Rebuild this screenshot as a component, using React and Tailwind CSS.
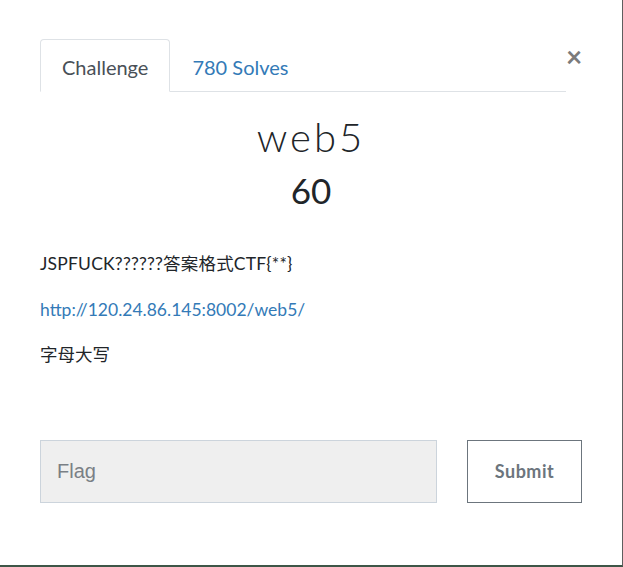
import React, { useState } from "react";

function App() {
  const [tab, setTab] = useState("challenge");
  const [flag, setFlag] = useState("");

  return (
    <div
      className="w-[623px] h-[567px] bg-white border-r border-r-[#5e5e5e] border-b-2 border-b-[#3e5647] overflow-hidden"
      style={{ fontFamily: "Lato, 'Noto Sans CJK SC', sans-serif" }}
    >
      <div className="pl-[40px] pr-[40px] pt-[39px]">
        {/* Tabs */}
        <div className="flex items-start">
          <ul className="flex w-[526px] border-b border-[#dee2e6]">
            <li>
              <button
                onClick={() => setTab("challenge")}
                className={
                  tab === "challenge"
                    ? "h-[53px] pt-[3px] px-[21px] -mb-px bg-white border border-[#dee2e6] border-b-white rounded-t-[4px] text-[20px] text-[#495057]"
                    : "h-[53px] pt-[3px] px-[21px] -mb-px border border-transparent text-[20px] text-[#337ab7]"
                }
              >
                Challenge
              </button>
            </li>
            <li>
              <button
                onClick={() => setTab("solves")}
                className={
                  tab === "solves"
                    ? "h-[53px] pt-[3px] px-[21px] -mb-px bg-white border border-[#dee2e6] border-b-white rounded-t-[4px] text-[20px] text-[#495057]"
                    : "h-[53px] pt-[3px] px-[21px] -mb-px border border-transparent text-[20px] text-[#337ab7]"
                }
              >
                780 Solves
              </button>
            </li>
          </ul>
          <button className="ml-auto mt-[3px] w-[16px] text-[28px] leading-none font-bold text-[#7b7b7b]">
            ×
          </button>
        </div>

        {/* Title */}
        <div className="text-center text-[#212529]">
          <h2 className="mt-[21px] text-[40px] leading-[48px] font-light tracking-[3px]">
            web5
          </h2>
          <h3 className="mt-[8px] text-[35px] leading-[42px]">60</h3>
        </div>

        {/* Description */}
        <div className="mt-[40px] text-[17.5px] leading-[26px] text-[#212529]">
          <p className="tracking-[0.2px]">JSPFUCK??????答案格式CTF{"{**}"}</p>
          <p className="mt-[20px]">
            <a href="#" className="text-[#337ab7]">
              http://120.24.86.145:8002/web5/
            </a>
          </p>
          <p className="mt-[19px]">字母大写</p>
        </div>

        {/* Flag form */}
        <div className="mt-[72px] flex justify-between">
          <input
            value={flag}
            onChange={(e) => setFlag(e.target.value)}
            placeholder="Flag"
            className="w-[397px] h-[63px] px-[16px] bg-[#efefef] border border-[#ccd4dc] text-[20px] text-[#495057] placeholder:text-[#7a7f85] outline-none"
            style={{ fontFamily: "'Liberation Sans', Arial, sans-serif" }}
          />
          <button className="w-[115px] h-[63px] border border-[#6c757d] bg-white text-[18px] font-bold tracking-[0.5px] text-[#6c757d]">
            Submit
          </button>
        </div>
      </div>
    </div>
  );
}

export default App;
